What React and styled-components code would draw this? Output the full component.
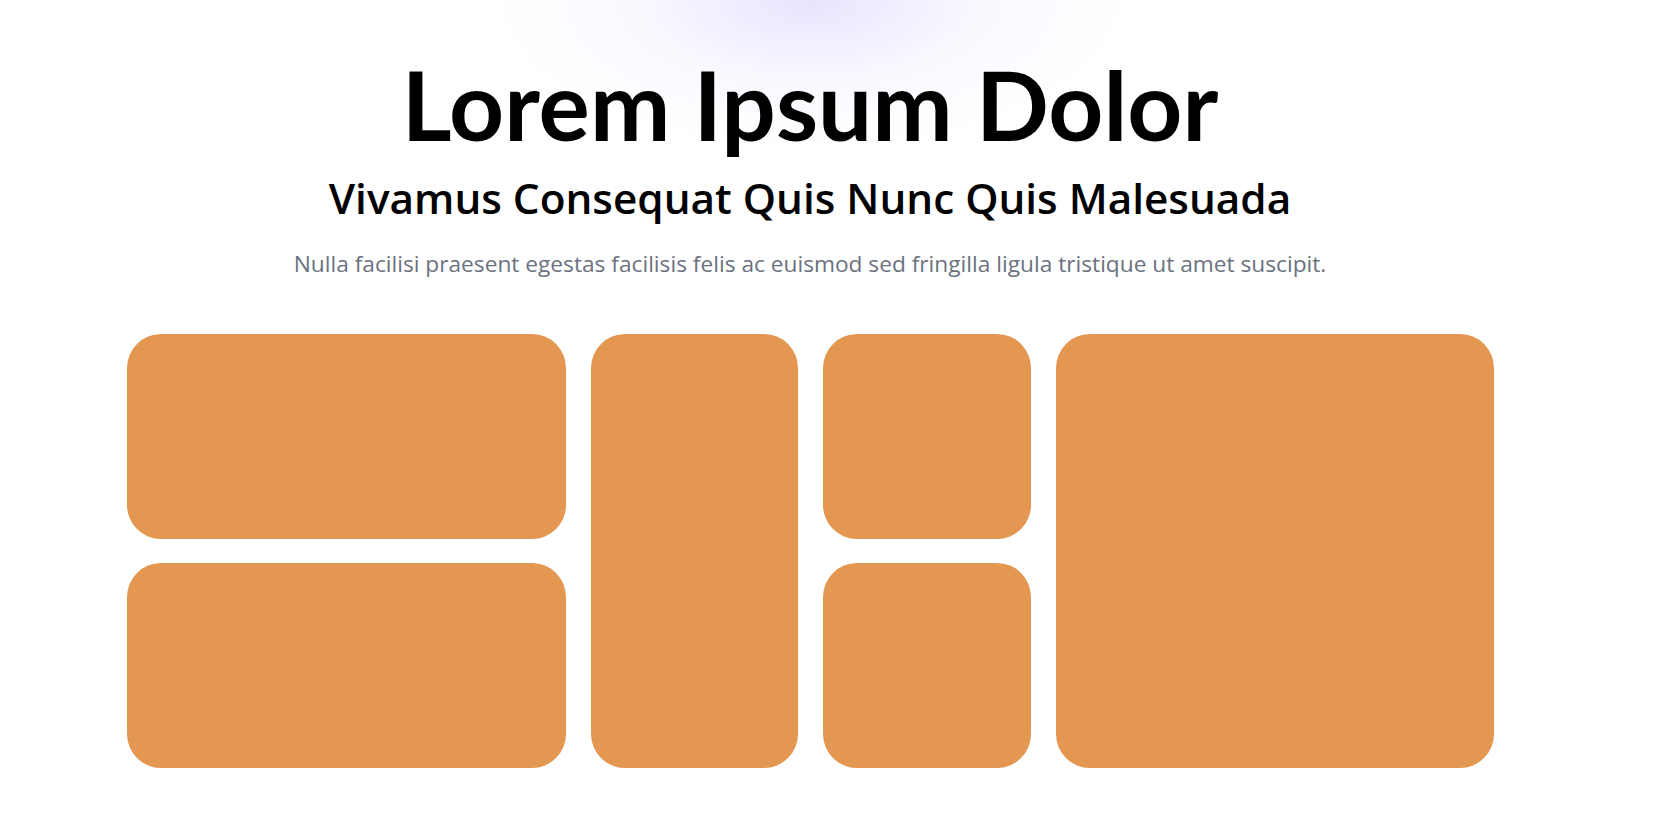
import React from "react";
import styled, { createGlobalStyle } from "styled-components";

const GlobalStyle = createGlobalStyle`
  html, body {
    margin: 0;
    padding: 0;
    background: #ffffff;
  }
  body {
    font-family: "Open Sans", "Noto Sans", sans-serif;
  }
`;

const tiles = [
  { id: 1, col: "1", row: "1" },
  { id: 2, col: "1", row: "2" },
  { id: 3, col: "2", row: "1 / span 2" },
  { id: 4, col: "3", row: "1" },
  { id: 5, col: "3", row: "2" },
  { id: 6, col: "4", row: "1 / span 2" },
];

const App = () => {
  return (
    <>
      <GlobalStyle />
      <Page>
        <Hero>
          <Title>Lorem Ipsum Dolor</Title>
          <Subtitle>Vivamus Consequat Quis Nunc Quis Malesuada</Subtitle>
          <Lead>
            Nulla facilisi praesent egestas facilisis felis ac euismod sed
            fringilla ligula tristique ut amet suscipit.
          </Lead>
        </Hero>
        <Bento>
          {tiles.map((tile) => (
            <Tile key={tile.id} $col={tile.col} $row={tile.row} />
          ))}
        </Bento>
      </Page>
    </>
  );
};

const Page = styled.main`
  width: 1620px;
  min-height: 814px;
  box-sizing: border-box;
  display: flex;
  flex-direction: column;
  align-items: center;
  background: radial-gradient(
    ellipse 320px 150px at 810px 0,
    rgba(224, 216, 254, 0.7),
    rgba(240, 236, 255, 0.35) 55%,
    rgba(255, 255, 255, 0) 100%
  );
`;

const Hero = styled.header`
  display: flex;
  flex-direction: column;
  align-items: center;
  text-align: center;
  padding-top: 46px;
`;

const Title = styled.h1`
  margin: 0;
  font-family: "Lato", "Open Sans", sans-serif;
  font-size: 96px;
  font-weight: 700;
  line-height: 1.2;
  color: #000000;
`;

const Subtitle = styled.h2`
  margin: 12px 0 0;
  font-size: 42.3px;
  font-weight: 600;
  line-height: 1.2;
  color: #000000;
`;

const Lead = styled.p`
  margin: 23px 0 0;
  font-size: 22.7px;
  line-height: 1.5;
  color: #6b7280;
`;

const Bento = styled.section`
  margin-top: 53px;
  display: grid;
  grid-template-columns: 439px 207px 208px 438px;
  grid-template-rows: 205px 205px;
  gap: 24px 25px;
`;

const Tile = styled.div`
  grid-column: ${(p) => p.$col};
  grid-row: ${(p) => p.$row};
  background: #e39751;
  border-radius: 34px;
`;

export default App;
